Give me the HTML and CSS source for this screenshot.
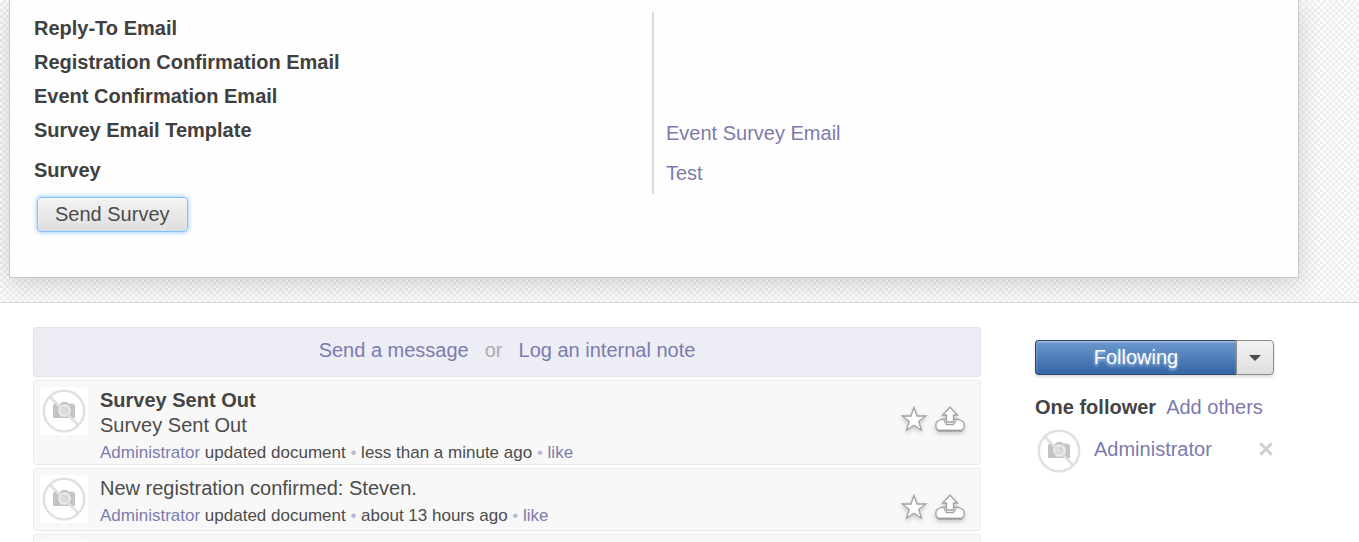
FILE: index.html
```html
<!DOCTYPE html>
<html lang="en">
<head>
<meta charset="utf-8">
<title>Event</title>
<link rel="stylesheet" href="styles.css">
</head>
<body>
<svg class="defs" aria-hidden="true">
  <symbol id="nophoto" viewBox="0 0 48 48">
    <path d="M13 17.500h1v-1h4v1h2l2-2.500h5l2 2.500v-1h4v1h2v13.500h-22z" fill="#c4c4c4"/>
    <circle cx="24.500" cy="23.500" r="6.300" fill="#ececec"/>
    <circle cx="24.500" cy="23.500" r="4" fill="#d6d6d6"/>
    <circle cx="24" cy="24" r="20.200" fill="none" stroke="#e0e0e0" stroke-width="2.500"/>
    <path d="M10 10l28 28" stroke="#e0e0e0" stroke-width="2.700"/>
  </symbol>
  <symbol id="star" viewBox="0 0 28 28">
    <path d="M14 1.500l3 8.500h8.800l-7 5.500 2.600 8.700-7.400-5-7.400 5 2.600-8.700-7-5.500h8.800z" fill="#fff" stroke="#a2a2a2" stroke-width="1.300"/>
  </symbol>
  <symbol id="todo" viewBox="0 0 32 28">
    <path d="M7 13.500h18c2 .8 5 2.500 5 4.500v4l-2.500 2.500h-23L2 22v-4c0-2 3-3.700 5-4.500z" fill="#fff" stroke="#a2a2a2" stroke-width="1.300"/>
    <path d="M3.500 24.700h25" stroke="#999" stroke-width="1.700"/>
    <path d="M10 14.500l2.500 4h7l2.500-4" fill="none" stroke="#a2a2a2" stroke-width="1.300"/>
    <path d="M16 1.300l7.500 7.700h-4v7h-7V9h-4z" fill="#fff" stroke="#a2a2a2" stroke-width="1.300"/>
  </symbol>
</svg>
<section class="stage">
  <div class="sheet">
    <table class="fields">
      <tr><th scope="row">Reply-To Email</th><td></td></tr>
      <tr><th scope="row">Registration Confirmation Email</th><td></td></tr>
      <tr><th scope="row">Event Confirmation Email</th><td></td></tr>
      <tr class="linked"><th scope="row">Survey Email Template</th><td><a href="#">Event Survey Email</a></td></tr>
      <tr class="linked"><th scope="row">Survey</th><td><a href="#">Test</a></td></tr>
    </table>
    <button class="btn send" type="button">Send Survey</button>
  </div>
</section>
<main class="chatter">
  <section class="wall">
    <div class="compose"><a href="#">Send a message</a><span class="or">or</span><a href="#">Log an internal note</a></div>
    <article class="msg">
      <svg class="avatar"><use href="#nophoto"/></svg>
      <div class="body">
        <strong>Survey Sent Out</strong>
        <p>Survey Sent Out</p>
        <footer><a href="#">Administrator</a> updated document <i>•</i> less than a minute ago <i>•</i> <a href="#">like</a></footer>
      </div>
      <div class="tools">
        <button type="button" aria-label="Star"><svg class="star"><use href="#star"/></svg></button>
        <button type="button" aria-label="Move to inbox"><svg class="todo"><use href="#todo"/></svg></button>
      </div>
    </article>
    <article class="msg">
      <svg class="avatar"><use href="#nophoto"/></svg>
      <div class="body">
        <p>New registration confirmed: Steven.</p>
        <footer><a href="#">Administrator</a> updated document <i>•</i> about 13 hours ago <i>•</i> <a href="#">like</a></footer>
      </div>
      <div class="tools">
        <button type="button" aria-label="Star"><svg class="star"><use href="#star"/></svg></button>
        <button type="button" aria-label="Move to inbox"><svg class="todo"><use href="#todo"/></svg></button>
      </div>
    </article>
    <article class="msg">
      <svg class="avatar"><use href="#nophoto"/></svg>
    </article>
  </section>
  <aside class="followers">
    <div class="split">
      <button class="btn follow" type="button">Following</button>
      <button class="btn more" type="button" aria-label="Subscription options"><span class="caret"></span></button>
    </div>
    <div class="head"><strong>One follower</strong><a href="#">Add others</a></div>
    <div class="person">
      <svg class="avatar"><use href="#nophoto"/></svg>
      <a href="#">Administrator</a>
      <button class="remove" type="button" aria-label="Remove follower"><svg viewBox="0 0 14 14"><path d="M2 2l10 10M12 2L2 12" stroke="#cfcfcf" stroke-width="2.600"/></svg></button>
    </div>
  </aside>
</main>
</body>
</html>
```
FILE: styles.css
```css
* { box-sizing: border-box; }
html { overflow: hidden; }
body {
  margin: 0;
  height: 100vh;
  overflow: hidden;
  background: #fff;
  color: #4c4c4c;
  font: 20px/24px "Liberation Sans", Arial, sans-serif;
}
a { color: #7c7bad; text-decoration: none; }
p { margin: 0; }
button { font: inherit; color: inherit; }
.defs { position: absolute; width: 0; height: 0; }

.stage {
  padding: 0 60px 24px 9px;
  border-bottom: 1px solid #d6d6d6;
  overflow: hidden;
  background: repeating-conic-gradient(#efefef 0 25%, #fcfcfc 0 50%) 0 0 / 6px 6px;
}
.sheet {
  padding: 12px 26px 45px 24px;
  background: #fefefe;
  border: 1px solid #c8c8d3;
  border-top: 0;
  box-shadow: 0 6px 24px rgba(0, 0, 0, 0.16);
}
.fields { width: 100%; border-collapse: collapse; table-layout: fixed; }
.fields th, .fields td { height: 34px; padding: 4px 0; text-align: left; vertical-align: top; }
.fields tr.linked > * { height: 40px; }
.fields td { border-left: 2px solid #dcdcdc; padding: 4px 0 6px 12px; vertical-align: middle; }
.fields th { color: #404040; }

.btn {
  height: 35px;
  padding: 0 17px 2px;
  border: 1px solid #a6a6a6;
  border-radius: 4px;
  background: linear-gradient(#f3f3f3, #dedede);
}
.send {
  display: block;
  margin: 3px 0 0 3px;
  border-color: #80bfff;
  box-shadow: 0 0 5px #80bfff, inset 0 1px 2px #fff;
}

.chatter { display: flex; gap: 54px; padding: 24px 85px 0 33px; }
.wall { flex: 1; display: flex; flex-direction: column; gap: 3px; }
.compose {
  display: flex;
  justify-content: center;
  height: 50px;
  padding-top: 10px;
  gap: 16px;
  border: 1px solid #e2e2ef;
  border-radius: 3px;
  background: #ededf6;
}
.or { color: #aaa; }
.msg {
  display: flex;
  min-height: 63px;
  padding: 6px 14px 0 6px;
  border: 1px solid #ebebeb;
  border-radius: 3px;
  background: #f8f8f8;
}
.avatar { flex: none; width: 48px; height: 48px; border-radius: 3px; background: #fff; }
.body { flex: 1; margin-left: 12px; padding-top: 1px; line-height: 25px; }
.body strong { display: block; }
.body footer { padding-top: 3px; font-size: 17px; line-height: 23px; }
footer i { font-style: normal; color: #b9b8d6; }
.tools { display: flex; align-items: flex-start; gap: 6px; margin-top: 19px; }
.tools button, .remove { display: flex; padding: 0; border: 0; background: none; }
.tools svg { height: 28px; filter: drop-shadow(0 2px 2px rgba(0, 0, 0, 0.2)); }
.star { width: 28px; }
.todo { width: 32px; }

.followers { width: 239px; padding-top: 13px; }
.split { display: flex; }
.follow {
  flex: 1;
  border-color: #29486f;
  border-right: 0;
  border-radius: 4px 0 0 4px;
  background: linear-gradient(#6c9ad0, #3465a4);
  color: #fff;
  text-shadow: 0 2px 3px #a9c8ee;
  box-shadow: 0 2px 3px rgba(0, 0, 0, 0.15), inset 0 1px 2px rgba(255, 255, 255, 0.5);
}
.more {
  width: 38px;
  padding: 0 12px;
  border-color: #8c8c8c;
  border-radius: 0 4px 4px 0;
  box-shadow: 0 2px 3px rgba(0, 0, 0, 0.15);
}
.caret { display: block; border: 6px solid transparent; border-top-color: #4c4c4c; border-bottom: 0; }
.head { display: flex; gap: 10px; margin-top: 20px; }
.head strong, .body strong { color: #444; }
.person { display: flex; align-items: center; margin-top: 8px; }
.person a { flex: 1; margin: 0 0 4px 11px; }
.remove { margin-bottom: 4px; }
.remove svg { width: 16px; height: 16px; }
```
